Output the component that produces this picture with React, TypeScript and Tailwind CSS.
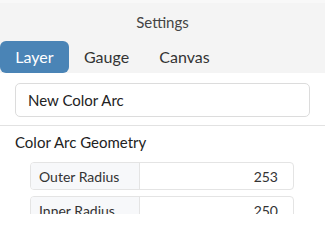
export default function App() {
  return (
    <div
      className="w-[325px] h-[214px] overflow-hidden bg-white text-[#333]"
      style={{ fontFamily: "Lato, 'Open Sans', sans-serif" }}
    >
      <div className="bg-[#f4f4f4] border-t-[3px] border-[#f8f8f8]">
        <div className="h-[38px] flex items-center justify-center text-[15px] text-[#444]">
          Settings
        </div>
        <div className="flex h-[32px] items-stretch">
          <div className="w-[69px] rounded-[6px] bg-[#4a84b6] text-white text-[16px] flex items-center justify-center">
            Layer
          </div>
          <div className="w-[75px] flex items-center justify-center text-[16px] text-[#333]">
            Gauge
          </div>
          <div className="w-[81px] flex items-center justify-center text-[16px] text-[#333]">
            Canvas
          </div>
        </div>
      </div>
      <div className="px-[15px] pt-[10px] pb-[8px]">
        <div className="h-[34px] rounded-[5px] border border-[#dcdcdc] flex items-center px-[12px] text-[15px] text-[#222]">
          New Color Arc
        </div>
      </div>
      <div className="border-t border-[#e2e2e2]">
        <div className="px-[15px] pt-[6px] text-[15px] text-[#222] leading-[20px]">
          Color Arc Geometry
        </div>
        <div className="pl-[30px] pr-[31px] pt-[10px] flex flex-col gap-[6px]">
          {[
            ["Outer Radius", "253"],
            ["Inner Radius", "250"],
          ].map(([label, value]) => (
            <div
              key={label}
              className="h-[28px] flex rounded-[4px] border border-[#e4e4e4] overflow-hidden text-[14px]"
            >
              <div className="w-[109px] bg-[#f7f8fa] border-r border-[#e4e4e4] flex items-center px-[8px] text-[#333]">
                {label}
              </div>
              <div className="flex-1 flex items-center justify-end pr-[15px] text-[#333]">
                {value}
              </div>
            </div>
          ))}
        </div>
      </div>
    </div>
  );
}
